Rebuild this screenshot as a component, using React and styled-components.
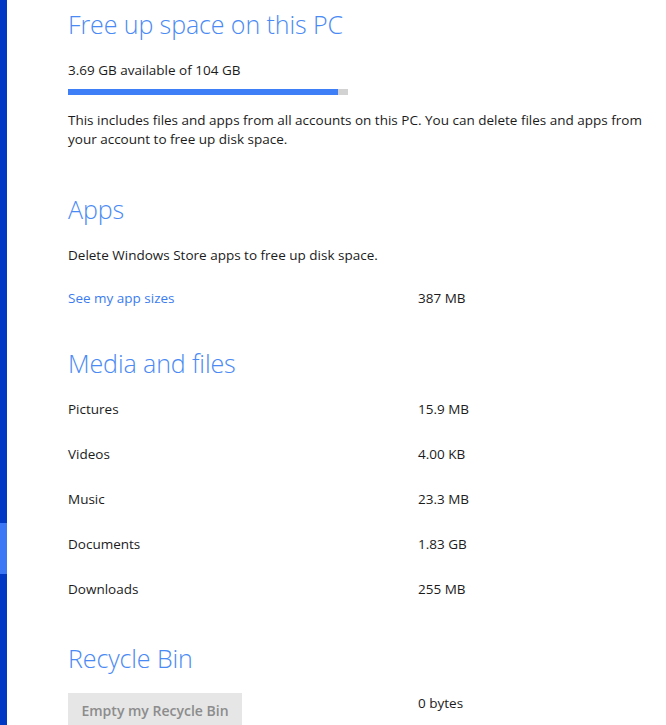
import styled, { createGlobalStyle } from "styled-components";

const GlobalStyle = createGlobalStyle`
  html, body {
    margin: 0;
    padding: 0;
    background: #ffffff;
    overflow: hidden;
  }
  body {
    font-family: "Open Sans", "Noto Sans", sans-serif;
    color: #1b1b1b;
  }
`;

const Page = styled.div`
  display: flex;
  width: 666px;
  height: 725px;
  overflow: hidden;
`;

const ScrollRail = styled.div`
  display: flex;
  flex-direction: column;
  width: 7px;
  flex-shrink: 0;
  background: #0039c3;
  padding-top: 523px;
`;

const ScrollThumb = styled.div`
  height: 51px;
  background: #3a78f5;
`;

const Content = styled.main`
  flex: 1;
  padding: 6px 0 0 61px;
`;

const Heading = styled.h2`
  margin: ${({ top }) => top}px 0 0;
  font-size: 25px;
  font-weight: 300;
  line-height: 36px;
  color: #4a8af5;
  letter-spacing: -0.1px;
`;

const Text = styled.p`
  margin: ${({ top }) => top}px 0 0;
  font-size: 13.5px;
  line-height: ${({ lh }) => lh || 20}px;
  max-width: 592px;
`;

const Meter = styled.div`
  display: flex;
  width: 280px;
  height: 6px;
  margin-top: 9px;
  background: #d2d2d2;
`;

const MeterFill = styled.div`
  background: #3e7ef6;
`;

const Row = styled.div`
  display: flex;
  align-items: ${({ top }) => (top ? "flex-start" : "center")};
  height: ${({ h }) => h || 45}px;
  font-size: 13.5px;
`;

const RowLabel = styled.div`
  width: 350px;
  flex-shrink: 0;
`;

const Value = styled.div`
  line-height: 20px;
`;

const Link = styled.a`
  color: #3b7cf0;
  text-decoration: none;
  line-height: 20px;
  cursor: pointer;
`;

const Button = styled.button`
  width: 174px;
  height: 34px;
  border: none;
  background: #e6e6e6;
  color: #8c8c8c;
  font-family: "Open Sans", "Noto Sans", sans-serif;
  font-size: 14px;
  font-weight: 600;
  padding: 0;
`;

const Rows = styled.div`
  margin-top: 5px;
`;

const media = [
  ["Pictures", "15.9 MB"],
  ["Videos", "4.00 KB"],
  ["Music", "23.3 MB"],
  ["Documents", "1.83 GB"],
  ["Downloads", "255 MB"],
];

const used = 100 - (3.69 / 104) * 100;

export default function App() {
  return (
    <Page>
      <GlobalStyle />
      <ScrollRail>
        <ScrollThumb />
      </ScrollRail>
      <Content>
        <Heading top={0}>Free up space on this PC</Heading>
        <Text top={18}>3.69 GB available of 104 GB</Text>
        <Meter>
          <MeterFill style={{ width: `${used}%` }} />
        </Meter>
        <Text top={16} lh={19}>
          This includes files and apps from all accounts on this PC. You can delete files and apps from
          your account to free up disk space.
        </Text>

        <Heading top={42}>Apps</Heading>
        <Text top={18}>Delete Windows Store apps to free up disk space.</Text>
        <Row top h={20} style={{ marginTop: 23 }}>
          <RowLabel>
            <Link>See my app sizes</Link>
          </RowLabel>
          <Value>387 MB</Value>
        </Row>

        <Heading top={37}>Media and files</Heading>
        <Rows>
          {media.map(([label, size]) => (
            <Row key={label}>
              <RowLabel>{label}</RowLabel>
              <Value>{size}</Value>
            </Row>
          ))}
        </Rows>

        <Heading top={29}>Recycle Bin</Heading>
        <Row top h={34} style={{ marginTop: 17 }}>
          <RowLabel>
            <Button>Empty my Recycle Bin</Button>
          </RowLabel>
          <Value>0 bytes</Value>
        </Row>
      </Content>
    </Page>
  );
}
